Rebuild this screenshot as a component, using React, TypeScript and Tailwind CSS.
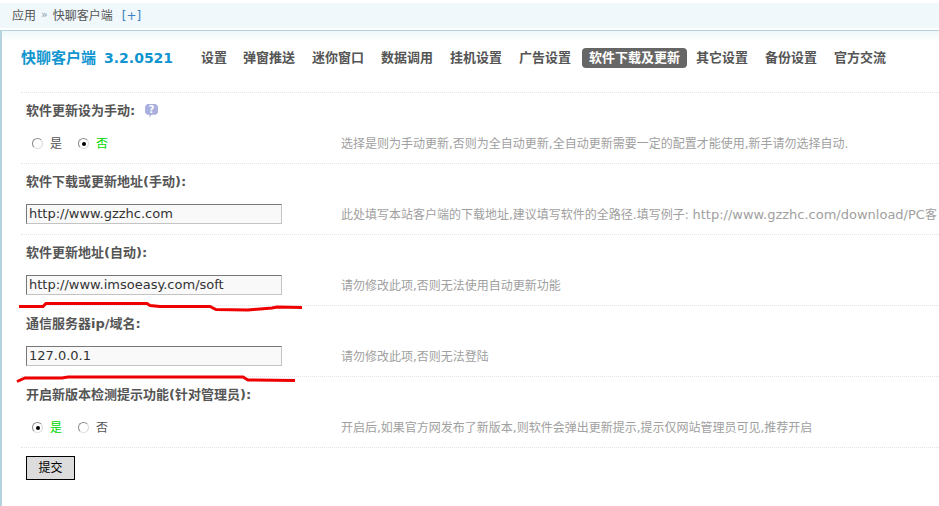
const FONT = "font-['DejaVu_Sans','Noto_Sans_CJK_SC',sans-serif]";

const NAV_ITEMS = [
  { label: "设置", width: "w-[42px]" },
  { label: "弹窗推送", width: "w-[69px]" },
  { label: "迷你窗口", width: "w-[69px]" },
  { label: "数据调用", width: "w-[69px]" },
  { label: "挂机设置", width: "w-[69px]" },
  { label: "广告设置", width: "w-[69px]" },
  { label: "软件下载及更新", width: "w-[105px]", active: true },
  { label: "其它设置", width: "w-[69px]" },
  { label: "备份设置", width: "w-[69px]" },
  { label: "官方交流", width: "w-[69px]" },
];

function RadioDot({ checked }: { checked?: boolean }) {
  return (
    <span className="flex h-[11px] w-[11px] items-center justify-center rounded-full border border-[#8a8a8a] border-r-[#d8d8d8] border-b-[#e0e0e0] bg-white">
      {checked && <span className="h-[4px] w-[4px] rounded-full bg-black" />}
    </span>
  );
}

function YesNo({ yes }: { yes: boolean }) {
  return (
    <div className="flex h-[15px] translate-y-[1px] items-center pl-[6px] text-[12px] text-[#555]">
      <RadioDot checked={yes} />
      <span className={`ml-[7px] w-[12px] ${yes ? "text-[#00d800]" : ""}`}>是</span>
      <span className="ml-[16px]">
        <RadioDot checked={!yes} />
      </span>
      <span className={`ml-[7px] w-[12px] ${yes ? "" : "text-[#00d800]"}`}>否</span>
    </div>
  );
}

function TextField({ value }: { value: string }) {
  return (
    <div className="flex h-[20px] w-[256px] items-center border border-[#777] border-r-[#c4c4c4] border-b-[#c4c4c4] bg-[#f9f9f9] pl-[2px] text-[13px] text-[#333]">
      {value}
    </div>
  );
}

function Section({
  title,
  hint,
  help,
  children,
}: {
  title: string;
  hint: React.ReactNode;
  help?: boolean;
  children: React.ReactNode;
}) {
  return (
    <section className="h-[71px] border-t border-dotted border-[#dde6ea]">
      <div className="flex h-[35px] items-center pl-[5px] text-[13px] font-bold text-[#555]">
        {title}
        {help && (
          <svg className="ml-[9px]" width="15" height="15" viewBox="0 0 14 14">
            <path d="M3 1h8l2 2v6l-2 2H7l-2 2.5V11H3L1 9V3z" fill="#a9b0e0" />
            <text x="7" y="9.5" fontSize="9" fontWeight="700" fill="#fff" textAnchor="middle">?</text>
          </svg>
        )}
      </div>
      <div className="flex h-[29px] items-center pl-[5px]">
        <div className="w-[315px] shrink-0">{children}</div>
        <div className="whitespace-nowrap pt-[3px] text-[12px] text-[#a0a0a0]">{hint}</div>
      </div>
    </section>
  );
}

export default function App() {
  return (
    <div className={`${FONT} relative h-[506px] w-[939px] overflow-hidden bg-white pt-[3px]`}>
      {/* breadcrumb bar */}
      <div className="h-[28px] border-b border-[#b5d3de] bg-white">
        <div className="flex h-[25px] items-center bg-[#f0f8fc] pl-[12px] text-[12px] text-[#555]">
          应用
          <span className="mx-[5px] text-[11px] text-[#8b9bb0]">»</span>
          快聊客户端
          <span className="ml-[9px] text-[#3f7fc0]">[+]</span>
        </div>
      </div>

      <div className="h-[475px] border-l-2 border-[#b5d3de]">
        <div className="h-[10px] bg-gradient-to-b from-[#eef7fa] to-white" />

        {/* header row with version and tabs */}
        <div className="flex h-[51px] items-start pt-[7px] pl-[19px]">
          <div className="w-[175px] shrink-0 whitespace-nowrap text-[15px] font-bold leading-[20px] text-[#0f95cf]">
            快聊客户端
            <span className="ml-[8px] text-[14px]">3.2.0521</span>
          </div>
          <div className="flex items-center text-[13px] font-bold text-[#555]">
            {NAV_ITEMS.map((item) => (
              <span
                key={item.label}
                className={`flex h-[20px] shrink-0 items-center ${item.width} ${
                  item.active ? "mr-[4px] -ml-[1px] justify-center rounded-[4px] bg-[#666] text-white" : "pl-[5px]"
                }`}
              >
                {item.label}
              </span>
            ))}
          </div>
        </div>

        <div className="pl-[19px]">
          <Section title="软件更新设为手动:" help hint="选择是则为手动更新,否则为全自动更新,全自动更新需要一定的配置才能使用,新手请勿选择自动.">
            <YesNo yes={false} />
          </Section>
          <Section
            title="软件下载或更新地址(手动):"
            hint={
              <>
                此处填写本站客户端的下载地址,建议填写软件的全路径.填写例子:{" "}
                <span className="text-[13px]">http://www.gzzhc.com/download/PC</span>客
              </>
            }
          >
            <TextField value="http://www.gzzhc.com" />
          </Section>
          <Section title="软件更新地址(自动):" hint="请勿修改此项,否则无法使用自动更新功能">
            <TextField value="http://www.imsoeasy.com/soft" />
          </Section>
          <Section title="通信服务器ip/域名:" hint="请勿修改此项,否则无法登陆">
            <TextField value="127.0.0.1" />
          </Section>
          <Section title="开启新版本检测提示功能(针对管理员):" hint="开启后,如果官方网发布了新版本,则软件会弹出更新提示,提示仅网站管理员可见,推荐开启">
            <YesNo yes />
          </Section>
          <div className="border-t border-dotted border-[#dde6ea] pt-[8px] pl-[5px]">
            <button className="flex h-[24px] w-[49px] items-center justify-center border border-black bg-[#dcdcdc] text-[12px] text-black">
              提交
            </button>
          </div>
        </div>
      </div>

      {/* hand-drawn red underlines */}
      <svg className="absolute top-0 left-0" width="939" height="506" fill="none">
        <path
          d="M19 306.5 L43 306.5 L46 303.5 L147 303.5 L150 305.5 L160 306.5 L210 306.5 L216 309.5 L248 310 L272 308 L277 307 L302 307.5"
          stroke="#ee0000"
          strokeWidth="3"
        />
        <path
          d="M17 381.5 L25 378 L62 378 L68 377 L243 377 L248 380 L295 380.5"
          stroke="#ee0000"
          strokeWidth="3"
        />
      </svg>
    </div>
  );
}
